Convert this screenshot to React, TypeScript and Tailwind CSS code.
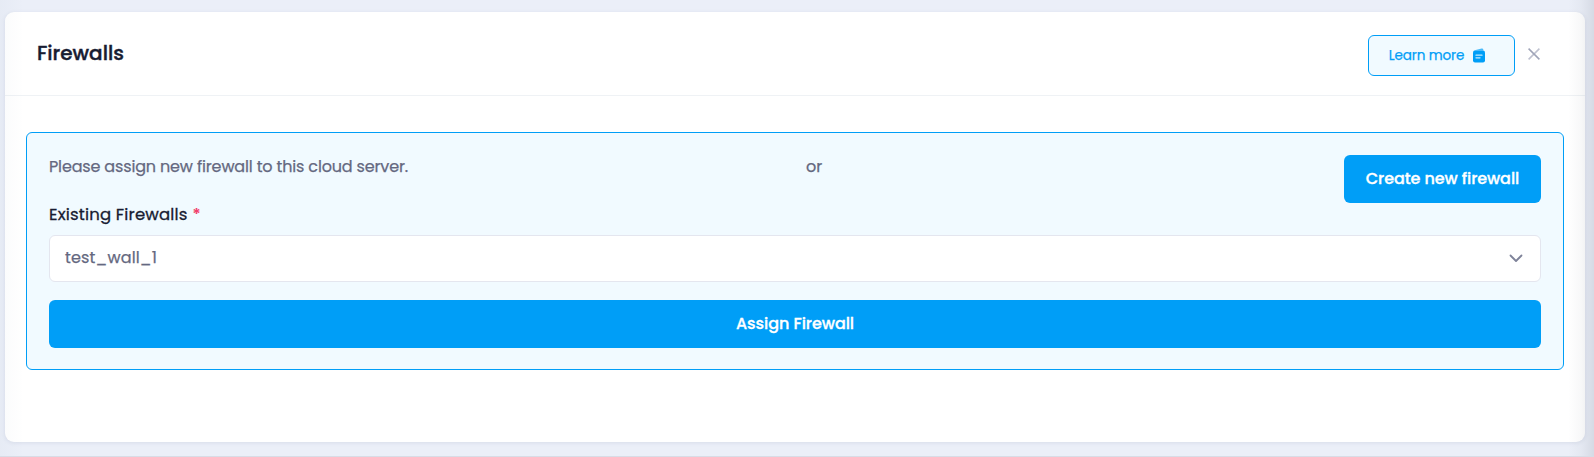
import React from "react";

function NotesIcon() {
  return (
    <svg width="12" height="15" viewBox="0 0 12 15" className="block shrink-0">
      <path d="M0.6 2.6 8.6 0.5Q10 0.2 10.3 1.5V2.6Z" fill="#009ef7" opacity="0.7" />
      <rect x="0" y="2.4" width="12" height="12" rx="2" fill="#009ef7" />
      <path d="M3 7.2h6M3 9.8h4" stroke="#c4e9ff" strokeWidth="1.3" strokeLinecap="round" />
    </svg>
  );
}

export default function App() {
  return (
    <div className="relative h-[457px] w-[1594px] overflow-hidden border-b border-[#d8dce6] bg-[#ebeff8] pl-[5px] pt-3 font-['Poppins','Inter',sans-serif] text-base text-[#646880]">
      <main className="h-[430px] w-[1580px] rounded-[9px] bg-white shadow-[0_1px_4px_rgba(80,90,130,0.12)]">
        <header className="flex h-[84px] items-start justify-between border-b border-[#eff2f5] pl-8 pr-11">
          <h1 className="mt-[27px] text-[20px] leading-7 font-medium text-[#181c32] [-webkit-text-stroke:0.4px_#181c32]">Firewalls</h1>
          <div className="mt-[23px] flex items-center gap-[13px]">
            <button className="flex h-[41px] w-[147px] items-center gap-[8px] rounded-md border border-[#009ef7] bg-[#f1faff] pl-[19px] text-[13.5px] whitespace-nowrap text-[#009ef7]">
              <span className="mt-[2px] w-[77px] tracking-[-0.1px] [-webkit-text-stroke:0.25px_#009ef7]">Learn more</span>
              <NotesIcon />
            </button>
            <button aria-label="Close" className="-mt-1 mr-px">
              <svg width="12" height="12" viewBox="0 0 12 12" className="block">
                <path d="M11.4.6.6 11.4" stroke="#bec1cf" strokeWidth="1.5" />
                <path d="m.6.6 10.8 10.8" stroke="#9fa4b8" strokeWidth="1.5" />
              </svg>
            </button>
          </div>
        </header>
        <section className="mt-9 ml-[21px] h-[238px] w-[1538px] rounded-md border border-[#009ef7] bg-[#f1faff] px-[22px] pt-[22px]">
          <div className="grid h-[48px] grid-cols-[757px_1fr_197px] items-start">
            <p className="leading-6 tracking-[-0.16px] [-webkit-text-stroke:0.25px_#646880]">Please assign new firewall to this cloud server.</p>
            <p className="leading-6 [-webkit-text-stroke:0.25px_#646880]">or</p>
            <button className="h-[48px] rounded-md bg-[#009ef7] font-medium tracking-[-0.08px] whitespace-nowrap text-white [-webkit-text-stroke:0.3px_#fff]">Create new firewall</button>
          </div>
          <label className="block text-[16.5px] leading-[23px] tracking-[0.18px] text-[#181c32] [-webkit-text-stroke:0.3px_#181c32]">
            Existing Firewalls <span className="font-semibold text-[#f1416c] [-webkit-text-stroke:0px_#f1416c]">*</span>
          </label>
          <div className="mt-[9px] flex h-[47px] items-center justify-between rounded-md border border-[#e4e6ef] bg-white pr-[17px] pl-[15px]">
            <span className="-mt-0.5 tracking-[0.15px] [-webkit-text-stroke:0.25px_#646880]">test_wall_1</span>
            <svg width="14" height="9" viewBox="0 0 14 9" fill="none" stroke="#7e8299" strokeWidth="1.8" strokeLinecap="round" strokeLinejoin="round">
              <path d="m1.5 1.5 5.5 5.5 5.5-5.5" />
            </svg>
          </div>
          <button className="mt-[18px] block h-[48px] w-full rounded-md bg-[#009ef7] font-medium tracking-[-0.05px] text-white [-webkit-text-stroke:0.3px_#fff]">Assign Firewall</button>
        </section>
      </main>
      <div className="pointer-events-none absolute inset-y-0 right-0 w-[26px] bg-gradient-to-r from-transparent via-[#28324609] to-[#2832461c]" />
      <div className="pointer-events-none absolute inset-y-0 left-0 w-6 bg-gradient-to-r from-[#28466e06] to-transparent" />
    </div>
  );
}
